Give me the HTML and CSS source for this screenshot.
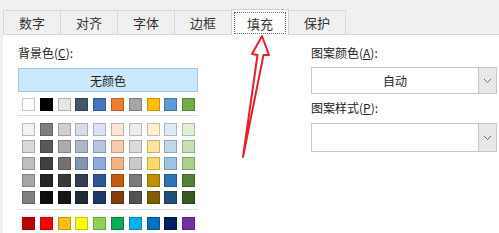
FILE: index.html
```html
<!DOCTYPE html>
<html lang="zh-CN">

<head>
    <meta charset="UTF-8">
    <meta name="viewport" content="width=device-width, initial-scale=1.0">
    <title>设置单元格格式 - 填充</title>
    <link rel="stylesheet" href="styles.css">
</head>

<body>
    <div class="tabs">
        <div class="tab">数字</div>
        <div class="tab">对齐</div>
        <div class="tab">字体</div>
        <div class="tab">边框</div>
        <div class="tab active"><span class="focus">填充</span></div>
        <div class="tab">保护</div>
    </div>

    <div class="panel">
        <div class="left">
            <div class="label">背景色(<u>C</u>):</div>
            <button class="no-color">无颜色</button>
            <div class="swatches" id="basic"></div>
            <div class="sep"></div>
            <div class="swatches theme" id="theme"></div>
            <div class="sep sep-bottom"></div>
            <div class="swatches" id="standard"></div>
        </div>

        <div class="right">
            <div class="label">图案颜色(<u>A</u>):</div>
            <div class="combo">
                <span class="combo-text">自动</span>
                <span class="combo-btn">
                    <svg width="9" height="6" viewBox="0 0 9 6"><polyline points="1,1 4.5,4.5 8,1" fill="none" stroke="#707070" stroke-width="1"/></svg>
                </span>
            </div>
            <div class="label label-2">图案样式(<u>P</u>):</div>
            <div class="combo combo-2">
                <span class="combo-text"></span>
                <span class="combo-btn">
                    <svg width="9" height="6" viewBox="0 0 9 6"><polyline points="1,1 4.5,4.5 8,1" fill="none" stroke="#707070" stroke-width="1"/></svg>
                </span>
            </div>
        </div>
    </div>

    <svg class="arrow" width="499" height="233" viewBox="0 0 499 233">
        <polygon points="262,36 269,55 263.5,55 243,157 257.5,55 252,54" fill="none" stroke="#e3212b" stroke-width="2" stroke-linejoin="round"/>
    </svg>

    <script>
        const basic = ['#ffffff', '#000000', '#e7e6e6', '#44546a', '#4472c4', '#ed7d31', '#a5a5a5', '#ffc000', '#5b9bd5', '#70ad47'];
        const theme = [
            ['#f2f2f2', '#7f7f7f', '#d0cece', '#d6dce4', '#dae3f3', '#fbe5d6', '#ededed', '#fff2cc', '#deebf7', '#e2f0d9'],
            ['#d9d9d9', '#595959', '#aeabab', '#adb9ca', '#b4c7e7', '#f8cbad', '#dbdbdb', '#ffe699', '#bdd7ee', '#c5e0b4'],
            ['#bfbfbf', '#404040', '#767171', '#8497b0', '#8faadc', '#f4b183', '#c9c9c9', '#ffd966', '#9dc3e6', '#a9d18e'],
            ['#a6a6a6', '#262626', '#3b3838', '#333f50', '#2f5597', '#c55a11', '#7b7b7b', '#bf9000', '#2e75b6', '#548235'],
            ['#808080', '#0d0d0d', '#171616', '#222a35', '#203864', '#843c0c', '#525252', '#7f6000', '#1f4e79', '#385723']
        ];
        const standard = ['#c00000', '#ff0000', '#ffc000', '#ffff00', '#92d050', '#00b050', '#00b0f0', '#0070c0', '#002060', '#7030a0'];

        function fill(id, colors) {
            const box = document.getElementById(id);
            colors.forEach(function (c) {
                const s = document.createElement('span');
                s.className = 'swatch';
                s.style.backgroundColor = c;
                box.appendChild(s);
            });
        }

        fill('basic', basic);
        fill('theme', theme.flat());
        fill('standard', standard);
    </script>
</body>

</html>
```

FILE: styles.css
```css
body {
    margin: 0;
    width: 499px;
    height: 233px;
    overflow: hidden;
    background-color: #f0f0f0;
    font-family: "Noto Sans CJK SC", "Noto Sans", sans-serif;
    font-size: 12px;
    color: #222;
    position: relative;
}

.tabs {
    display: flex;
    align-items: flex-end;
    height: 34px;
    padding-left: 3px;
    box-sizing: border-box;
}

.tab {
    width: 58px;
    height: 24px;
    box-sizing: border-box;
    margin-left: -1px;
    border: 1px solid #d9d9d9;
    border-bottom: none;
    background-color: #f0f0f0;
    font-size: 13px;
    line-height: 23px;
    text-align: center;
    color: #333;
}

.tab:first-child {
    margin-left: 0;
}

.tab.active {
    height: 26px;
    background-color: #fff;
    border-color: #d0d0d0;
    position: relative;
    z-index: 1;
    margin-bottom: -1px;
    padding: 2px 2px 0;
}

.focus {
    display: block;
    height: 22px;
    line-height: 21px;
    border: 1px dotted #6d6d6d;
    box-sizing: border-box;
}

.panel {
    display: flex;
    margin-left: 3px;
    height: 199px;
    background-color: #fff;
    border-top: 1px solid #d9d9d9;
    box-sizing: border-box;
    padding: 10px 0 0 15px;
}

.left {
    width: 180px;
}

.label {
    height: 16px;
    line-height: 16px;
    color: #222;
}

.no-color {
    display: block;
    width: 180px;
    height: 24px;
    margin-top: 7px;
    padding: 0;
    border: 1px solid #99c9ef;
    background-color: #cce8ff;
    font-family: inherit;
    font-size: 12px;
    color: #222;
}

.swatches {
    display: grid;
    grid-template-columns: repeat(10, 13px);
    column-gap: 4.8px;
    row-gap: 4px;
    padding-left: 4px;
    margin-top: 6px;
}

.swatches.theme {
    margin-top: 7px;
}

.swatch {
    width: 13px;
    height: 13px;
    box-sizing: border-box;
    border: 1px solid rgba(0, 0, 0, 0.22);
}

.sep {
    height: 1px;
    background-color: #dcdcdc;
    margin-top: 4px;
}

.sep-bottom {
    margin-top: 5px;
}

#standard {
    margin-top: 7px;
}

.right {
    width: 186px;
    margin-left: 113px;
}

.combo {
    display: flex;
    height: 27px;
    margin-top: 6px;
    border: 1px solid #c8c8c8;
    box-sizing: border-box;
    background-color: #fff;
}

.combo-text {
    flex: 1;
    text-align: center;
    line-height: 25px;
    color: #222;
}

.combo-btn {
    width: 17px;
    display: flex;
    align-items: center;
    justify-content: center;
    background-color: #e8e8e8;
    border-left: 1px solid #c8c8c8;
}

.label-2 {
    margin-top: 6px;
}

.combo-2 {
    height: 29px;
    margin-top: 7px;
}

.arrow {
    position: absolute;
    left: 0;
    top: 0;
    pointer-events: none;
    z-index: 2;
}
```
